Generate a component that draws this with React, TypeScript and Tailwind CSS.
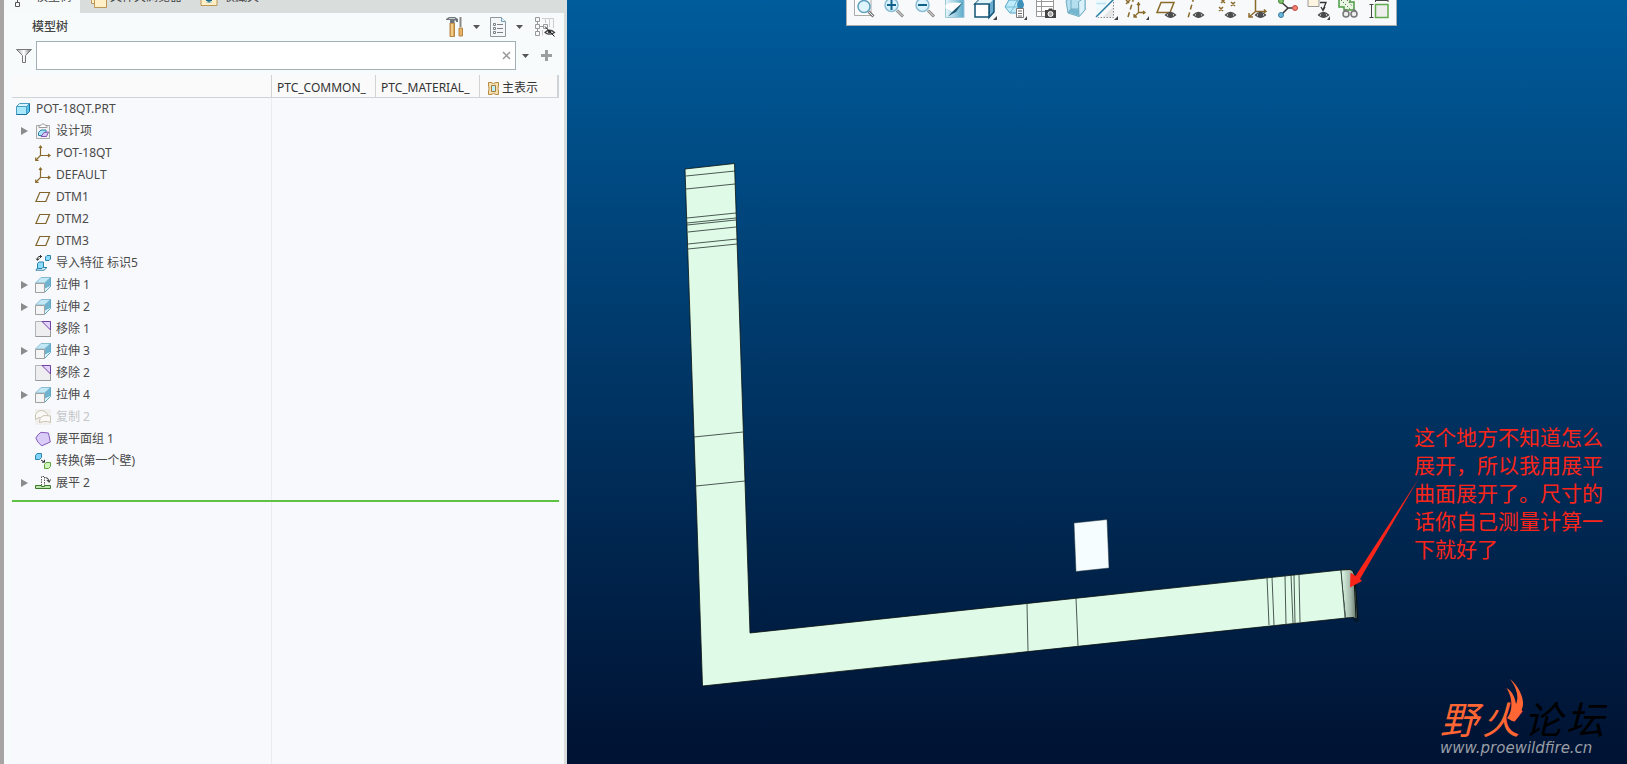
import React, { useState } from 'react';

type IconKind =
  | 'part'
  | 'design'
  | 'csys'
  | 'plane'
  | 'import'
  | 'extrude'
  | 'remove'
  | 'copy'
  | 'quilt'
  | 'convert'
  | 'flatten';

interface TreeItem {
  label: string;
  icon: IconKind;
  expandable?: boolean;
  suppressed?: boolean;
}

const TREE_ITEMS: TreeItem[] = [
  { label: '设计项', icon: 'design', expandable: true },
  { label: 'POT-18QT', icon: 'csys' },
  { label: 'DEFAULT', icon: 'csys' },
  { label: 'DTM1', icon: 'plane' },
  { label: 'DTM2', icon: 'plane' },
  { label: 'DTM3', icon: 'plane' },
  { label: '导入特征 标识5', icon: 'import' },
  { label: '拉伸 1', icon: 'extrude', expandable: true },
  { label: '拉伸 2', icon: 'extrude', expandable: true },
  { label: '移除 1', icon: 'remove' },
  { label: '拉伸 3', icon: 'extrude', expandable: true },
  { label: '移除 2', icon: 'remove' },
  { label: '拉伸 4', icon: 'extrude', expandable: true },
  { label: '复制 2', icon: 'copy', suppressed: true },
  { label: '展平面组 1', icon: 'quilt' },
  { label: '转换(第一个壁)', icon: 'convert' },
  { label: '展平 2', icon: 'flatten', expandable: true },
];

const TreeIcon: React.FC<{ kind: IconKind }> = ({ kind }) => (
  <svg viewBox="0 0 16 16" className="h-4 w-4 shrink-0" fill="none">
    {kind === 'part' && (
      <g>
        <path d="M10.500 5.500L13.500 2.500V10.500L10.500 13.500Z" fill="#54c0ee" />
        <path d="M.5 5.500L3.500 2.500H13.500L10.500 5.500Z" fill="#d9f4ff" stroke="#4a9cc0" />
        <path d="M.5 5.500H10.500V13.500H.5Z" fill="#a9e8ff" stroke="#4a9cc0" />
        <path d="M.5 13.500H10.500L13.500 10.500V2.500" stroke="#1b6f98" />
      </g>
    )}
    {kind === 'design' && (
      <>
        <path d="M1.500 2.500H14.500V15.500H1.500Z" fill="#f3f3f3" stroke="#a9a9a9" />
        <path d="M4 4.500V2.500L6.500 2L8 .5L9.500 2L12 2.500V4.500Z" fill="#fff" stroke="#999" />
        <path d="M3.500 9.500L6 7H11V10L9 12.500H3.500Z" fill="#a9e3fa" stroke="#2b86ab" />
        <path d="M6 13.500L9 9.500L13.500 9L11.500 13.500Z" fill="#d8c8f5" stroke="#8352b5" />
      </>
    )}
    {kind === 'csys' && (
      <g stroke="#8b6b2c" strokeWidth="1.200">
        <path d="M5.500 1V10.500H15M5.500 10.500L1 15" />
        <path d="M4 3L5.500 1L7 3M13 9L15 10.500L13 12M.7 12.500V15.300H3.600" />
      </g>
    )}
    {kind === 'plane' && <path d="M4.800 3.500H14.500L10.800 12.500H.9Z" stroke="#80632b" strokeWidth="1.200" />}
    {kind === 'import' && (
      <>
        <path d="M10.500 2L12 .5H15.500V4L14 5.500H10.500Z" fill="#8cdcff" stroke="#2c83aa" />
        <path d="M7 1.500H4Q2.500 1.500 2.500 5M.8 3.500L2.500 5.200L4.500 3.500M6 0L4.500 1.500L6 3" stroke="#333" />
        <path d="M.8 15.200L3 12.500H12L9 15.200Z" fill="#e6f8ff" stroke="#2c83aa" />
        <path d="M2.500 8.500L4 7H8.500V12L7 13.500H2.500Z" fill="#8cdcff" stroke="#2c83aa" />
      </>
    )}
    {kind === 'extrude' && (
      <>
        <path d="M.5 6L6 .5H15.500L9.500 6Z" fill="#c3e8f5" stroke="#86bdd3" />
        <path d="M9.500 6L15.500 .5V9L9.500 12Z" fill="#6fb3cf" />
        <path d="M9.500 15.500V12L15.500 9V9.500Z" fill="#dff3fb" />
        <path d="M15.500 .5V9.500L9.500 15.500" stroke="#60a9c9" />
        <path d="M.5 6.500H9.500V15.500H.5Z" fill="#f5f5f5" stroke="#a0a0a0" />
      </>
    )}
    {kind === 'remove' && (
      <>
        <path d="M.5 .5H15.500V15.500H.5Z" fill="#eeeef0" stroke="#b4b4b4" />
        <path d="M7 .5H15.500V9Z" fill="#e0d4fa" stroke="#7440a8" />
        <path d="M15.500 9.500V15.500H.5" stroke="#999" />
      </>
    )}
    {kind === 'copy' && (
      <>
        <path d="M0 0H16V16H0Z" fill="#f1f0ee" />
        <g fill="#faf9f6" stroke="#c9c3b3">
          <path d="M.5 10.500V5.500Q3 1 6.500 1.500Q10.500 1.500 12.500 5.500V9H8Q4 7 .5 10.500Z" />
          <path d="M4.500 13.500L5 9.500Q7 6 10.500 6.500L15.500 7V13.500L12.500 12.500H8.500Z" />
        </g>
      </>
    )}
    {kind === 'quilt' && (
      <path d="M.8 7Q3 3 6 1.300L13.500 2L15.300 11L6.800 14.800Q2.500 12 .8 7Z" fill="#d9cdf8" stroke="#8659bd" />
    )}
    {kind === 'convert' && (
      <>
        <path d="M.5 2.500L2 .5H6.500V4.500L4.500 6.500H.5Z" fill="#7fd2f8" stroke="#2d86b0" />
        <path d="M9.500 11.500L11 9.500H15.500V13.500L13.500 15.500H9.500Z" fill="#d2f5be" stroke="#5ba73b" />
        <path d="M6 7L9.500 9M9.500 6.800V9.200H7" stroke="#333" />
      </>
    )}
    {kind === 'flatten' && (
      <>
        <path d="M6.500 10.500V1.500H9.500V10.500" fill="#fff" stroke="#555" strokeDasharray="1.500 1" />
        <path d="M.5 10.500H6.500V11.500H9.500V10.500H15.500V13.500H.5Z" stroke="#3d7a2c" fill="#bce6ad" />
        <path d="M10.500 2.500Q13.500 2.500 14 6.500M11.800 5L14 7.300L15.500 4.500" stroke="#333" />
      </>
    )}
  </svg>
);

function Eye({ x }: { x: number }) {
  return (
    <g transform={`translate(${x} 11)`}>
      <path d="M.5 4Q5.500 -1 10.500 4Q5.500 8.500 .5 4Z" fill="#fff" stroke="#4c4c4c" strokeWidth="1.300" />
      <circle cx="5.500" cy="4" r="2.600" fill="#4c4c4c" />
    </g>
  );
}

/* View toolbar glyphs. Only the lower part of each shows below the window edge. */
const TOOLS: { name: string; art: React.ReactNode }[] = [
  {
    name: 'Refit',
    art: (
      <>
        <path d="M2.500 -3H19V15.500H2.500Z" fill="#fff" stroke="#a9a9a9" />
        <path d="M16.500 11.500L21.500 16.500" stroke="#777" strokeWidth="3" />
        <path d="M16.500 11.500L21 16" stroke="#eee" />
        <circle cx="12" cy="6.500" r="6" fill="#dff4fd" stroke="#5d9fbe" strokeWidth="1.500" />
      </>
    ),
  },
  {
    name: 'Zoom In',
    art: (
      <>
        <path d="M15 10.500L21 16.500" stroke="#888" strokeWidth="3" />
        <path d="M15 10.500L20.500 16" stroke="#eee" />
        <circle cx="9.500" cy="5" r="6.500" fill="#d9f2fd" stroke="#8bbdd3" strokeWidth="1.500" />
        <path d="M5 5H14M9.500 0V10" stroke="#11628b" strokeWidth="2" />
      </>
    ),
  },
  {
    name: 'Zoom Out',
    art: (
      <>
        <path d="M15 10.500L21 16.500" stroke="#888" strokeWidth="3" />
        <path d="M15 10.500L20.500 16" stroke="#eee" />
        <circle cx="9.500" cy="5" r="6.500" fill="#d9f2fd" stroke="#8bbdd3" strokeWidth="1.500" />
        <path d="M5 5H14" stroke="#11628b" strokeWidth="2" />
      </>
    ),
  },
  {
    name: 'Repaint',
    art: (
      <>
        <defs>
          <linearGradient id="repaint" x1="0" y1="0" x2="1" y2="0">
            <stop offset="0" stopColor="#e8f6fb" />
            <stop offset="1" stopColor="#58a9c8" />
          </linearGradient>
        </defs>
        <path d="M2.500 -3H21V17.500H2.500Z" fill="url(#repaint)" stroke="#9cc8d9" />
        <path d="M2.500 5Q9 1 19 3.500L10 13Q7 9 2.500 8.500Z" fill="#fff" />
        <path d="M5 16.500L9 12L20 2L13 12L10 13.500Z" fill="#1d5876" />
      </>
    ),
  },
  {
    name: 'Display Style',
    art: (
      <>
        <path d="M2 4L7 -1H21V12L16 17.500V4Z" fill="#69acd0" stroke="#135475" strokeWidth="1.500" />
        <path d="M2 4L7 -1H21L16 4Z" fill="#dff3fb" />
        <path d="M2 4H16V17H2Z" fill="#fff" stroke="#135475" strokeWidth="1.500" />
        <path d="M20 20H24V16Z" fill="#444" />
      </>
    ),
  },
  {
    name: 'Saved Orientations',
    art: (
      <>
        <path d="M2 7L6 0H14L18 7L14 13H7Z" fill="#bfeaf9" stroke="#54a8c8" />
        <path d="M2 7H18M7 13L11 7L14 0" stroke="#76bed8" />
        <path d="M17.500 -4L21 4Q21 9 17.500 9Q14 9 14 4Z" fill="#3d91b8" />
        <path d="M13.500 8.500H20.500V17.500H13.500Z" fill="#fff" stroke="#777" />
        <path d="M15 11H19M15 13.500H19M15 16H19" stroke="#666" />
        <path d="M21 20H24V16Z" fill="#444" />
      </>
    ),
  },
  {
    name: 'View Manager',
    art: (
      <>
        <path d="M2.500 -3H19.500V16.500H2.500Z" fill="#fff" stroke="#999" />
        <path d="M2 1.500H20M2 6.500H20M2 11.500H20M7.500 -2V16" stroke="#999" />
        <path d="M11 10H14L15 8.500H18L19 10H22V18H11Z" fill="#444" />
        <circle cx="16.500" cy="14" r="2.500" fill="#aaa" stroke="#fff" />
      </>
    ),
  },
  {
    name: 'Perspective',
    art: (
      <>
        <path d="M2 1L7 -3H21V10L15 16.500L4 13Z" fill="#b4dfee" stroke="#6facc5" />
        <path d="M7 -3V9L20 10L14 15.500L4 12.500L7 9" fill="#75b5ce" />
        <path d="M7 -3V9H20M7 9L4 13" stroke="#6facc5" />
        <path d="M14.500 2L21 -3V10L15 16.500Z" fill="#d8f1fa" stroke="#6facc5" />
      </>
    ),
  },
  {
    name: 'Section',
    art: (
      <>
        <path d="M2 0H16L2 16Z" fill="#eef9fe" />
        <path d="M2 17L20 -1" stroke="#2c7fa5" strokeWidth="1.500" />
        <path d="M2.500 3.500H12" stroke="#b9e2f2" strokeWidth="1.500" />
        <path d="M9 17L19 7V17Z" fill="#e6e6e6" />
        <path d="M19.500 2V17.500H4" stroke="#888" strokeDasharray="1.500 1.500" />
        <path d="M20 20H24V16Z" fill="#444" />
      </>
    ),
  },
  {
    name: 'Datum Display',
    art: (
      <>
        <path d="M9 -3L3 17" stroke="#8b6b2c" strokeWidth="1.500" strokeDasharray="5 3" />
        <path d="M1 0L4 3M5 0L1 4" stroke="#8b6b2c" strokeWidth="1.500" />
        <path d="M13.500 2V12.500H20M13.500 12.500L9 17M12 5L13.500 3L15 5M18 11L20 12.500L18 14M9 14V17H12" stroke="#8b6b2c" strokeWidth="1.300" />
        <path d="M21 20H24V16Z" fill="#444" />
      </>
    ),
  },
  {
    name: 'Plane Display',
    art: (
      <>
        <path d="M6 2.500H19L15 12.500H2Z" stroke="#8b6b2c" strokeWidth="1.500" />
        <Eye x={10} />
      </>
    ),
  },
  {
    name: 'Axis Display',
    art: (
      <>
        <path d="M9 -3L3 18" stroke="#8b6b2c" strokeWidth="1.500" strokeDasharray="5 3" />
        <Eye x={8} />
      </>
    ),
  },
  {
    name: 'Point Display',
    art: (
      <>
        <path d="M6 -1L10 3M10 -1L6 3M16 2L20 6M20 2L16 6M4 7L8 11M8 7L4 11" stroke="#8b6b2c" strokeWidth="1.500" />
        <Eye x={10} />
      </>
    ),
  },
  {
    name: 'Csys Display',
    art: (
      <>
        <path d="M9.500 -2V11.500H20M9.500 11.500L3 17M18 9.500L20 11.500L18 13M3 13V17H7" stroke="#8b6b2c" strokeWidth="1.500" />
        <Eye x={9} />
      </>
    ),
  },
  {
    name: 'Spin Center',
    art: (
      <>
        <path d="M4 1L12 8L5 15M12 8H18" stroke="#333" strokeWidth="1.500" />
        <circle cx="5" cy="1" r="2.500" fill="#7bc06a" stroke="#48843c" />
        <circle cx="19" cy="8" r="2.500" fill="#f08070" stroke="#c04c42" />
        <circle cx="5" cy="15" r="2.500" fill="#6ab8dc" stroke="#3a7d9e" />
      </>
    ),
  },
  {
    name: 'Annotation Display',
    art: (
      <>
        <path d="M2 -3H13V6.500H2Z" fill="#fdf5df" stroke="#999" />
        <path d="M14 2.500H20L17 10M15 7L17 10.500L19 7" stroke="#333" strokeWidth="1.300" />
        <Eye x={12} />
        <path d="M21 20H24V16Z" fill="#444" />
      </>
    ),
  },
  {
    name: 'Simulation',
    art: (
      <>
        <path d="M2 -2H13V2H17V10H7V7H2Z" fill="#e7f7e2" stroke="#4b9b42" strokeWidth="1.500" />
        <path d="M4 0L13 9M10 0L15 6" stroke="#333" strokeDasharray="1 2" />
        <circle cx="9" cy="14" r="3" fill="#eee" stroke="#777" strokeWidth="1.500" />
        <circle cx="17" cy="14" r="3" fill="#eee" stroke="#777" strokeWidth="1.500" />
        <path d="M7 10H10M16 9L19 11" stroke="#777" strokeWidth="1.500" />
      </>
    ),
  },
  {
    name: 'Measure',
    art: (
      <>
        <path d="M8.500 4.500H21V17.500H8.500Z" fill="#eee" stroke="#62ab4d" strokeWidth="1.500" />
        <path d="M8 .5H21M4.500 4.500V17.500M2.500 4.500H6.500M2.500 17.500H6.500M8.500 -1V2M21 -1V2" stroke="#444" />
      </>
    ),
  },
];

// [x1, y1, x2, y2] of every bend edge drawn across the strip
const BEND_LINES = [
  [686, 176, 735, 171],
  [686, 189, 735, 184],
  [687, 218, 736, 213],
  [687, 223, 736, 218],
  [687, 225, 736, 220],
  [688, 232, 736, 227],
  [688, 244, 737, 239],
  [688, 249, 737, 244],
  [694, 437, 743, 432],
  [696, 486, 745, 481],
  [1027, 604, 1028, 651],
  [1076, 598, 1078, 646],
  [1267, 577, 1269, 625],
  [1272, 577, 1274, 625],
  [1285, 576, 1286, 624],
  [1291, 575, 1293, 623],
  [1294, 575, 1295, 623],
  [1299, 574, 1300, 622],
  [1341, 570, 1345, 618],
];

const Caret: React.FC = () => (
  <svg viewBox="0 0 7 4" className="h-1 w-[7px]">
    <path d="M0 0H7L3.500 4Z" fill="#555" />
  </svg>
);

const TreeTabs: React.FC = () => (
  <div role="tablist" className="flex h-[13px] items-end overflow-hidden bg-[#d9dedd] text-xs leading-4 text-[#444]">
    <button role="tab" aria-selected="true" className="flex h-8 w-[76px] items-end bg-[#f7fafa] pl-[10px]">
      <svg viewBox="0 0 16 13" className="mr-[6px] h-[13px] w-4" fill="none">
        <path d="M3.500 0V3M1.500 2.500H5.500V6.500H1.500Z" stroke="#555" />
      </svg>
      <span className="pb-2">模型树</span>
    </button>
    <button role="tab" aria-selected="false" className="flex h-8 items-end pl-[10px]">
      <svg viewBox="0 0 18 13" className="mr-[2px] h-[13px] w-[18px]" fill="#fff0c8" stroke="#bd9555">
        <path d="M1.500 -2H11V3.500H1.500Z" />
        <path d="M4.500 -2H16.500V7.500H4.500Z" />
      </svg>
      <span className="pb-2">文件夹浏览器</span>
    </button>
    <button role="tab" aria-selected="false" className="flex h-8 items-end pl-[18px]">
      <svg viewBox="0 0 18 13" className="mr-[5px] h-[13px] w-[18px]" fill="none">
        <path d="M1 -2H17V5.500H1Z" fill="#fff0c8" stroke="#bd9555" />
        <path d="M6 .5H12M9 -2V3M7 2.500L11 -1.500M7 -1.500L11 2.500" stroke="#176b94" />
      </svg>
      <span className="pb-2">收藏夹</span>
    </button>
  </div>
);

const PanelTitle: React.FC = () => (
  <div className="flex h-7 items-center justify-between pl-7 pr-2">
    <h2 className="text-xs font-medium text-[#444]">模型树</h2>
    <div className="flex items-center">
      <button aria-label="设置" className="flex items-center gap-[9px]">
        <svg viewBox="0 0 18 22" className="h-[22px] w-[18px]" fill="none">
          <path d="M4 7H8.500V20.500H4Z" fill="#dba75a" stroke="#b58543" />
          <path d="M6 8V20" stroke="#f8d798" strokeWidth="1.500" />
          <path d="M0 3L3 1H9L12 3V6H10V4.500H8.500V7H4V4H0Z" fill="#6d7579" />
          <path d="M3 2.500H9" stroke="#c8d0d4" />
          <path d="M14.500 1V11" stroke="#888" strokeWidth="2" />
          <path d="M13 12H16.500V20H13Z" fill="#e6b265" stroke="#b58543" />
        </svg>
        <Caret />
      </button>
      <button aria-label="显示" className="ml-[9px] flex items-center gap-[9px]">
        <svg viewBox="0 0 18 22" className="h-[22px] w-[18px]" fill="none">
          <path d="M1.500 1.500H12.500L16.500 5.500V20.500H1.500Z" fill="#f4f6f7" stroke="#90979a" />
          <path d="M12.500 1.500V5.500H16.500" stroke="#6da2b8" fill="#dff4fb" />
          <path d="M8 8.500H14M8 12.500H14M8 16.500H14" stroke="#7b8284" />
          <path d="M4.500 7.500H6.500V9.500H4.500ZM4.500 11.500H6.500V13.500H4.500ZM4.500 15.500H6.500V17.500H4.500Z" stroke="#7b8284" />
        </svg>
        <Caret />
      </button>
      <button aria-label="隐藏列" className="ml-[11px]">
        <svg viewBox="0 0 22 22" className="h-[22px] w-[22px]" fill="none">
          <path d="M1.500 1.500H5.500V5.500H1.500ZM1.500 8.500H5.500V12.500H1.500ZM1.500 15.500H5.500V19.500H1.500ZM9.500 8.500H13.500V12.500H9.500ZM3.500 5.500V8.500M3.500 12.500V15.500M5.500 10.500H9" stroke="#999" />
          <path d="M8 2.500H11.500V7M12 2.500H15.500V11M16 2.500H19.500V12M8.500 14V19.500" stroke="#ccc" />
          <path d="M11 16.500Q15.500 12 20.500 16.500Q15.500 20 11 16.500Z" fill="#fff" stroke="#444" strokeWidth="1.200" />
          <circle cx="15.500" cy="16" r="1.800" fill="#444" />
          <path d="M11 10.500L20.500 20.500" stroke="#111" />
        </svg>
      </button>
    </div>
  </div>
);

const FilterBar: React.FC = () => {
  const [query, setQuery] = useState('');

  return (
    <div className="flex h-[29px] items-center pl-3 pr-3">
      <svg viewBox="0 0 16 16" className="mr-1 h-4 w-4 shrink-0">
        <defs>
          <linearGradient id="funnel">
            <stop offset="0" stopColor="#aaa" />
            <stop offset=".5" stopColor="#fff" />
            <stop offset="1" stopColor="#666" />
          </linearGradient>
        </defs>
        <path d="M.5 1.500H15.500L9.500 7.500V14.500H6.500V7.500Z" fill="url(#funnel)" stroke="#777" />
      </svg>
      <div className="relative h-full flex-1">
        <input
          aria-label="过滤"
          value={query}
          onChange={(e) => setQuery(e.target.value)}
          className="h-full w-full border border-[#a3b0b3] bg-white pl-2 pr-6 text-xs outline-none"
        />
        <button aria-label="清除" onClick={() => setQuery('')} className="absolute right-[5px] top-[10px]">
          <svg viewBox="0 0 9 9" className="h-[9px] w-[9px]">
            <path d="M1 1L8 8M8 1L1 8" stroke="#999" strokeWidth="1.500" />
          </svg>
        </button>
      </div>
      <button aria-label="过滤选项" className="ml-[6px]">
        <Caret />
      </button>
      <button aria-label="添加" className="ml-[12px]">
        <svg viewBox="0 0 11 11" className="h-[11px] w-[11px]">
          <path d="M5.500 0V11M0 5.500H11" stroke="#9b9fa0" strokeWidth="3" />
        </svg>
      </button>
    </div>
  );
};

const TreeTable: React.FC = () => (
  <table className="w-full table-fixed border-separate border-spacing-0 text-left">
    <thead>
      <tr className="h-[23px] bg-[#fafafa] text-[#333]">
        <th className="w-[260px] border-b border-r border-[#cfd3d5] p-0" aria-label="名称"></th>
        <th className="w-[104px] overflow-hidden whitespace-nowrap border-b border-r border-[#cfd3d5] p-0 pl-[5px] pt-1 font-normal">
          PTC_COMMON_
        </th>
        <th className="w-[104px] overflow-hidden whitespace-nowrap border-b border-r border-[#cfd3d5] p-0 pl-[5px] pt-1 font-normal">
          PTC_MATERIAL_
        </th>
        <th className="border-b border-r-2 border-[#cfd3d5] p-0 pl-[7px] pt-1 font-normal">
          <span className="flex items-center gap-[2px]">
            <svg viewBox="0 0 13 15" className="h-[15px] w-[13px]" fill="none">
              <path d="M1.500 1.500H4L6.500 2.500L9 1.500H11.500V4L11 7.500L11.500 11V13.500H9L6.500 12.500L4 13.500H1.500V11L2 7.500L1.500 4Z" fill="#f8e1ae" stroke="#b58a42" />
              <path d="M4.500 4.500H8.500V10.500H4.500Z" fill="#bdefff" stroke="#9d7b41" />
            </svg>
            主表示
          </span>
        </th>
      </tr>
    </thead>
    <tbody className="text-[#4a4a4a]">
      <tr className="h-[22px]">
        <td className="border-r border-[#e9edef] p-0 pl-1">
          <span className="flex items-center gap-1">
            <TreeIcon kind="part" />
            POT-18QT.PRT
          </span>
        </td>
        <td colSpan={3} />
      </tr>
      {TREE_ITEMS.map((item) => (
        <tr key={item.label} className="h-[22px]">
          <td className="border-r border-[#e9edef] p-0 pl-[9px]">
            <span className="flex items-center">
              <span className="w-[14px]">
                {item.expandable && (
                  <button aria-label={`展开 ${item.label}`} className="block">
                    <svg viewBox="0 0 7 8" className="h-2 w-[7px]">
                      <path d="M0 0L7 4L0 8Z" fill="#8b8b8b" />
                    </svg>
                  </button>
                )}
              </span>
              <TreeIcon kind={item.icon} />
              <span className={item.suppressed ? 'ml-[5px] text-[#c4c6c8]' : 'ml-[5px]'}>{item.label}</span>
            </span>
          </td>
          <td colSpan={3} />
        </tr>
      ))}
    </tbody>
  </table>
);

const ModelScene: React.FC = () => (
  <svg viewBox="567 0 1060 764" className="absolute inset-0 h-full w-full" fill="none">
    <defs>
      <linearGradient id="curl">
        <stop offset="0" stopColor="#dffbe8" />
        <stop offset=".6" stopColor="#a5b9ac" />
        <stop offset="1" stopColor="#5c7165" />
      </linearGradient>
    </defs>
    <path d="M685 169L734.500 163.500L750 633L1341 570L1346 618L702.500 686Z" fill="#dffbe8" stroke="#0a120e" strokeWidth=".8" />
    <path d="M1341 570L1350 569.500Q1354 570 1355 578L1357 618L1346 618Z" fill="url(#curl)" />
    <path d="M1341 570L1350 569.500Q1354 570 1355 578L1358 621H1355L1354 617.500L1346 618M1354 576L1356 618" stroke="#0a120e" />
    {BEND_LINES.map(([x1, y1, x2, y2]) => (
      <path key={`${x1}-${y1}`} d={`M${x1} ${y1}L${x2} ${y2}`} stroke="#22302a" strokeWidth=".8" />
    ))}
    <path d="M1074 523L1107 519.500L1109 568L1076 571.500Z" fill="#f5fdff" stroke="#2c3b40" strokeWidth=".5" />
    <path d="M1419 478L1360 579L1362 581L1350 587.500L1350.500 572.500L1355.500 576Z" fill="#fb2419" />
    {/* Flame of the forum logo */}
    <path
      d="M1510 679C1519 686 1526 701 1522 709C1520 715 1516 721 1512 721L1507 718C1512 713 1514 700 1506.500 688C1512 691 1515 697 1516 704C1519 698 1517 688 1510 679Z"
      fill="#ff6633"
    />
  </svg>
);

const ViewToolbar: React.FC = () => (
  <div
    role="toolbar"
    className="absolute left-[279px] top-0 flex h-[26px] w-[551px] items-start justify-between overflow-hidden border border-t-0 border-[#a7abae] bg-[#f7f9fb] px-[5px]"
  >
    {TOOLS.map((tool) => (
      <button key={tool.name} aria-label={tool.name}>
        <svg viewBox="0 0 24 20" className="h-5 w-6" fill="none">
          {tool.art}
        </svg>
      </button>
    ))}
  </div>
);

export default function App() {
  return (
    <div className="flex min-h-screen font-['Noto_Sans','Noto_Sans_CJK_SC',sans-serif] text-xs leading-4">
      <aside className="flex w-[567px] shrink-0 flex-col border-l-4 border-r-[3px] border-l-[#a8a4a3] border-r-[#d9dedd] bg-[#f8fbfc]">
        <TreeTabs />
        <PanelTitle />
        <FilterBar />
        <div className="ml-2 mr-[5px] mt-[5px] flex flex-1 flex-col bg-[#f8f9fc]">
          <TreeTable />
          <div className="h-[6px] w-[260px] border-r border-[#e9edef]" />
          <div className="h-[2px] bg-[#5fc244]" />
          <div className="w-[260px] flex-1 border-r border-[#e9edef]" />
        </div>
      </aside>

      <main className="relative flex-1 overflow-hidden bg-linear-to-b from-[#005c9c] to-[#001232]">
        <ModelScene />
        <ViewToolbar />
        <p className="absolute right-[20px] top-[422px] w-[193px] font-['Noto_Sans_CJK_SC',sans-serif] text-[21px] leading-7 text-[#fb2419]">
          这个地方不知道怎么展开，所以我用展平曲面展开了。尺寸的话你自己测量计算一下就好了
        </p>
        <div className="absolute bottom-2 right-[23px] flex flex-col items-start gap-[2px]">
          <div className="flex gap-1 font-['Noto_Sans_CJK_SC',sans-serif] text-[38px] italic leading-10">
            <span className="text-[#ff6633]">野</span>
            <span className="text-[#ff6633]">火</span>
            <span className="text-black">论</span>
            <span className="text-black">坛</span>
          </div>
          <span className="font-['DejaVu_Sans',sans-serif] text-[15px] italic leading-4 text-[#999ea5]">www.proewildfire.cn</span>
        </div>
      </main>
    </div>
  );
}
